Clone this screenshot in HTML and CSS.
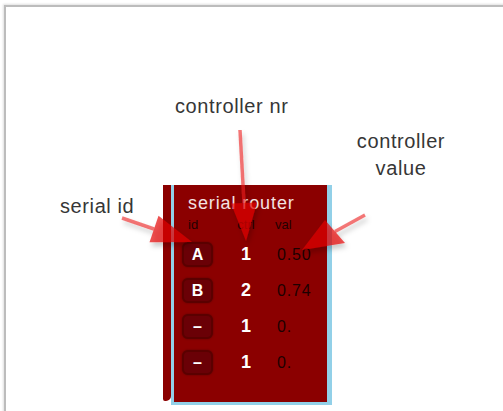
FILE: index.html
```html
<!DOCTYPE html>
<html>

<head>
    <meta charset="utf-8">
    <title>serial router</title>
    <link rel="stylesheet" href="styles.css">
</head>

<body>
    <div class="canvas">
        <div class="label label-nr">controller nr</div>
        <div class="label label-value">controller<br>value</div>
        <div class="label label-id">serial id</div>

        <div class="router">
            <div class="strip"></div>
            <div class="router-body">
                <div class="router-title">serial router</div>
                <div class="grid head">
                    <span class="col-id">id</span>
                    <span class="col-ctrl">ctrl</span>
                    <span class="col-val">val</span>
                </div>
                <div class="grid row">
                    <span class="badge">A</span>
                    <span class="ctrl">1</span>
                    <span class="val">0.50</span>
                </div>
                <div class="grid row">
                    <span class="badge">B</span>
                    <span class="ctrl">2</span>
                    <span class="val">0.74</span>
                </div>
                <div class="grid row">
                    <span class="badge">&ndash;</span>
                    <span class="ctrl">1</span>
                    <span class="val">0.</span>
                </div>
                <div class="grid row">
                    <span class="badge">&ndash;</span>
                    <span class="ctrl">1</span>
                    <span class="val">0.</span>
                </div>
            </div>
        </div>

        <svg class="arrows" width="497" height="404" viewBox="6 7 497 404">
            <defs>
                <filter id="shadow" x="-50%" y="-50%" width="200%" height="200%">
                    <feDropShadow dx="2" dy="4" stdDeviation="2.5" flood-color="#000" flood-opacity="0.3"/>
                </filter>
            </defs>
            <g filter="url(#shadow)" fill="rgba(228,0,0,0.68)" stroke="rgba(236,30,30,0.6)">
                <!-- serial id -->
                <line x1="122" y1="218" x2="154" y2="229" stroke-width="3.5"/>
                <polygon points="149.5,242.2 158.5,215.8 192,242" stroke="none"/>
                <!-- controller nr -->
                <line x1="240" y1="130" x2="244" y2="203" stroke-width="3.5"/>
                <polygon points="231,203.5 257,202.5 246,241" stroke="none"/>
                <!-- controller value -->
                <line x1="365" y1="215" x2="335" y2="231.5" stroke-width="3.5"/>
                <polygon points="325,220 345,243 302,250" stroke="none"/>
            </g>
        </svg>
    </div>
</body>

</html>
```

FILE: styles.css
```css
html, body {
margin: 0;
overflow: hidden;
background: #fff;
}

body {
font-family: "Liberation Sans", Arial, sans-serif;
}

.canvas {
position: relative;
width: 520px;
height: 420px;
margin: 5px 0 0 4px;
border-top: 2px solid #bcbcbc;
border-left: 2px solid #bcbcbc;
box-shadow: -1px -1px 2px rgba(0, 0, 0, 0.12);
padding: 178px 0 0 157px;
box-sizing: border-box;
}

.label {
position: absolute;
font-size: 20px;
line-height: 23px;
letter-spacing: 0.6px;
color: #363636;
}

.label-nr {
left: 169px;
top: 88px;
}

.label-id {
left: 54px;
top: 188px;
}

.label-value {
left: 335px;
top: 121px;
width: 120px;
text-align: center;
line-height: 26.6px;
}

.router {
display: flex;
align-items: flex-start;
}

.strip {
width: 8px;
height: 216px;
background: #8b0000;
border-radius: 0 0 5px 2px;
}

.router-body {
width: 161px;
box-sizing: border-box;
background: #8b0000;
border-left: 3px solid #92d0e8;
border-right: 5px solid #92d0e8;
border-bottom: 3px solid #92d0e8;
padding: 8px 0 27px 8px;
}

.router-title {
padding-left: 6px;
font-size: 18px;
line-height: 20px;
letter-spacing: 0.9px;
color: #f3e2e2;
}

.grid {
display: grid;
grid-template-columns: 44px 40px 1fr;
align-items: center;
}

.head {
margin-top: 5px;
font-size: 13px;
line-height: 14px;
color: #240000;
}

.col-id {
padding-left: 6px;
}

.col-ctrl {
text-align: center;
}

.col-val {
padding-left: 9px;
}

.row {
height: 25px;
margin-top: 10px;
}

.row + .row {
margin-top: 11px;
}

.badge {
width: 31px;
height: 25px;
box-sizing: border-box;
display: flex;
align-items: center;
justify-content: center;
background: #6a0006;
border: 2px solid #5a0000;
border-radius: 6px;
box-shadow: 0 0 2px rgba(40, 0, 0, 0.5);
color: #fff;
font-weight: bold;
font-size: 16px;
}

.ctrl {
text-align: center;
color: #fff;
font-weight: bold;
font-size: 18px;
}

.val {
padding-left: 11px;
font-size: 16px;
letter-spacing: 0.8px;
color: #1c0000;
}

.arrows {
position: absolute;
left: 0;
top: 0;
}
```
